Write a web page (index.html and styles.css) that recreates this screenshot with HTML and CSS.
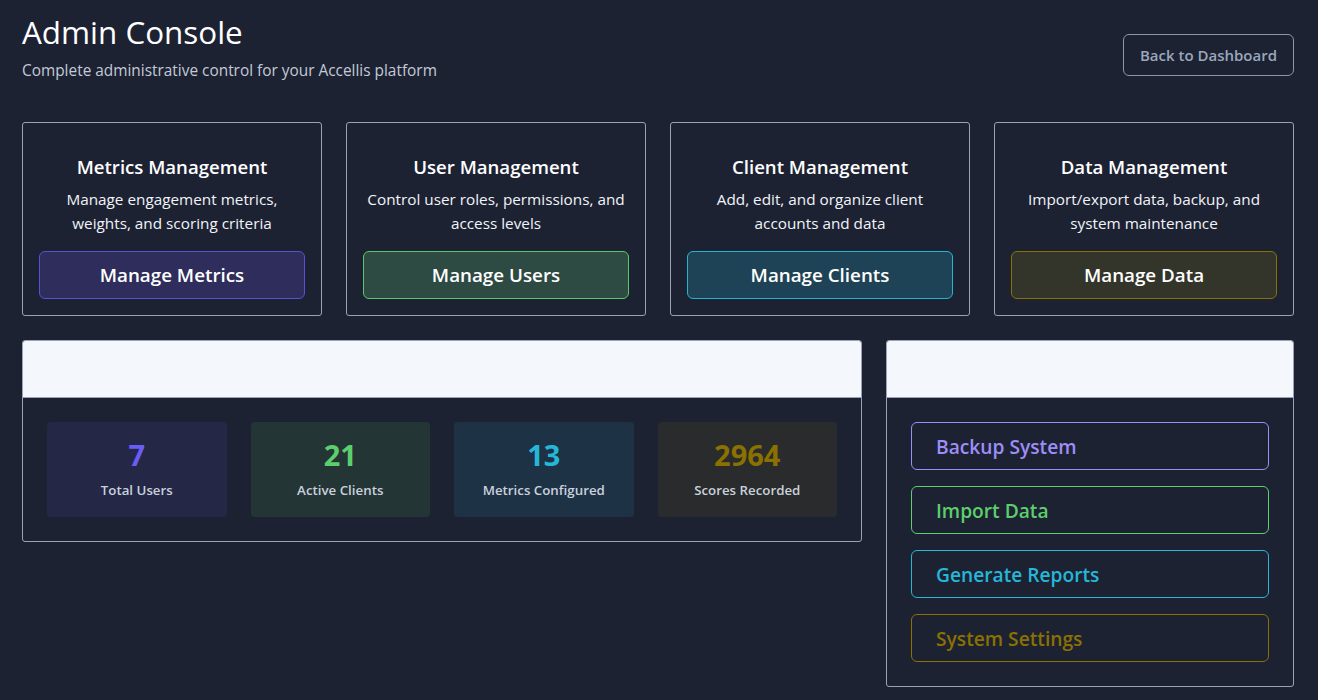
FILE: index.html
```html
<!DOCTYPE html>
<html lang="en">
<head>
<meta charset="utf-8">
<title>Admin Console</title>
<link rel="stylesheet" href="styles.css">
</head>
<body>
<div class="page">
  <header class="top">
    <div class="titles">
      <h1 class="title">Admin Console</h1>
      <p class="subtitle">Complete administrative control for your Accellis platform</p>
    </div>
    <button class="back-btn">Back to Dashboard</button>
  </header>

  <section class="cards">
    <div class="card">
      <h2 class="card-title">Metrics Management</h2>
      <p class="card-desc">Manage engagement metrics, weights, and scoring criteria</p>
      <button class="card-btn btn-purple">Manage Metrics</button>
    </div>
    <div class="card">
      <h2 class="card-title">User Management</h2>
      <p class="card-desc">Control user roles, permissions, and access levels</p>
      <button class="card-btn btn-green">Manage Users</button>
    </div>
    <div class="card">
      <h2 class="card-title">Client Management</h2>
      <p class="card-desc">Add, edit, and organize client accounts and data</p>
      <button class="card-btn btn-teal">Manage Clients</button>
    </div>
    <div class="card">
      <h2 class="card-title">Data Management</h2>
      <p class="card-desc">Import/export data, backup, and system maintenance</p>
      <button class="card-btn btn-olive">Manage Data</button>
    </div>
  </section>

  <section class="lower">
    <div class="panel">
      <div class="panel-head"></div>
      <div class="stats">
        <div class="stat stat-purple"><div class="stat-num">7</div><div class="stat-label">Total Users</div></div>
        <div class="stat stat-green"><div class="stat-num">21</div><div class="stat-label">Active Clients</div></div>
        <div class="stat stat-teal"><div class="stat-num">13</div><div class="stat-label">Metrics Configured</div></div>
        <div class="stat stat-olive"><div class="stat-num">2964</div><div class="stat-label">Scores Recorded</div></div>
      </div>
    </div>
    <div class="panel">
      <div class="panel-head"></div>
      <div class="actions">
        <button class="action act-purple">Backup System</button>
        <button class="action act-green">Import Data</button>
        <button class="action act-teal">Generate Reports</button>
        <button class="action act-olive">System Settings</button>
      </div>
    </div>
  </section>
</div>
</body>
</html>
```

FILE: styles.css
```css
* { box-sizing: border-box; }

html, body {
  margin: 0;
  padding: 0;
  background: #1d2233;
}

body {
  font-family: "Open Sans", "Liberation Sans", Arial, sans-serif;
  color: #f5f7fa;
}

.page {
  padding: 12px 24px 0 22px;
}

.top {
  display: flex;
  justify-content: space-between;
  align-items: flex-start;
}

.title {
  margin: 0;
  font-size: 31.4px;
  line-height: 40px;
  font-weight: 500;
  color: #ffffff;
}

.subtitle {
  margin: 9px 0 0;
  font-size: 15.4px;
  line-height: 20px;
  color: #c3cad6;
}

.back-btn {
  font-family: inherit;
  background: transparent;
  border: 1px solid #8b96aa;
  border-radius: 6px;
  color: #9aa7bd;
  font-size: 15px;
  font-weight: 600;
  height: 42px;
  padding: 0 16px;
  margin-top: 22px;
}

.cards {
  margin-top: 41px;
  display: grid;
  grid-template-columns: repeat(4, 1fr);
  gap: 24px;
}

.card {
  border: 1px solid #9aa3b5;
  border-radius: 3px;
  padding: 30px 16px 16px;
  text-align: center;
  display: flex;
  flex-direction: column;
  align-items: stretch;
}

.card-title {
  margin: 0;
  font-size: 18.6px;
  line-height: 28px;
  font-weight: 600;
  color: #ffffff;
}

.card-desc {
  margin: 6px 0 0;
  font-size: 15.3px;
  line-height: 24px;
  color: #f1f4f8;
  padding: 0 4px;
}

.card-btn {
  font-family: inherit;
  margin-top: 16px;
  height: 48px;
  border-radius: 6px;
  font-size: 18.8px;
  font-weight: 600;
  color: #ffffff;
  border: 1px solid;
}

.btn-purple { background: #2e2d5b; border-color: #5b4fd6; }
.btn-green  { background: #2d4a43; border-color: #58c96b; }
.btn-teal   { background: #1f4356; border-color: #22b6d6; }
.btn-olive  { background: #34352a; border-color: #8a7200; }

.lower {
  margin-top: 24px;
  display: grid;
  grid-template-columns: 840fr 408fr;
  gap: 24px;
  align-items: start;
}

.panel {
  border: 1px solid #9aa3b5;
  border-radius: 3px;
  overflow: hidden;
}

.panel-head {
  height: 57px;
  background: #f4f7fb;
  border-bottom: 1px solid #9aa3b5;
}

.stats {
  padding: 24px;
  display: grid;
  grid-template-columns: repeat(4, 1fr);
  gap: 24px;
}

.stat {
  border-radius: 4px;
  height: 95px;
  padding-top: 16px;
  text-align: center;
}

.stat-num {
  font-size: 29px;
  line-height: 34px;
  font-weight: 700;
}

.stat-label {
  margin-top: 8px;
  font-size: 13.3px;
  line-height: 20px;
  font-weight: 600;
  color: #c9d1dd;
}

.stat-purple { background: #252746; }
.stat-purple .stat-num { color: #6b5cf6; }
.stat-green { background: #243536; }
.stat-green .stat-num { color: #5ccf6c; }
.stat-teal { background: #1e3245; }
.stat-teal .stat-num { color: #25b7d8; }
.stat-olive { background: #292b2c; }
.stat-olive .stat-num { color: #8a7100; }

.actions {
  padding: 24px;
  display: flex;
  flex-direction: column;
  gap: 16px;
}

.action {
  font-family: inherit;
  height: 48px;
  background: transparent;
  border: 1px solid;
  border-radius: 6px;
  text-align: left;
  padding: 0 24px;
  font-size: 19.2px;
  font-weight: 600;
}

.act-purple { color: #9d8ef7; border-color: #9d8ef7; }
.act-green  { color: #5ccf6c; border-color: #5ccf6c; }
.act-teal   { color: #25b7d8; border-color: #25b7d8; }
.act-olive  { color: #8a7100; border-color: #8a7100; }
```
